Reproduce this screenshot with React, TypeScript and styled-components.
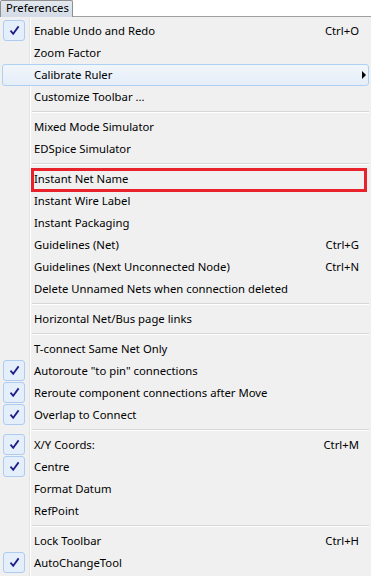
import * as React from 'react';
import styled, { createGlobalStyle, css } from 'styled-components';

const GlobalStyles = createGlobalStyle`
  html, body {
    margin: 0;
    padding: 0;
    background: #ffffff;
  }

  body {
    font-family: 'Segoe UI', 'Noto Sans', 'Liberation Sans', sans-serif;
    font-size: 11.3px;
    color: #000000;
  }

  *, *:before, *:after {
    box-sizing: border-box;
  }
`;

type Item =
  | { kind: 'sep' }
  | { kind: 'item'; label: string; shortcut?: string; checked?: boolean; submenu?: boolean; hover?: boolean; marked?: boolean };

const items: Item[] = [
  { kind: 'item', label: 'Enable Undo and Redo', shortcut: 'Ctrl+O', checked: true },
  { kind: 'item', label: 'Zoom Factor' },
  { kind: 'item', label: 'Calibrate Ruler', submenu: true, hover: true },
  { kind: 'item', label: 'Customize Toolbar ...' },
  { kind: 'sep' },
  { kind: 'item', label: 'Mixed Mode Simulator' },
  { kind: 'item', label: 'EDSpice Simulator' },
  { kind: 'sep' },
  { kind: 'item', label: 'Instant Net Name', marked: true },
  { kind: 'item', label: 'Instant Wire Label' },
  { kind: 'item', label: 'Instant Packaging' },
  { kind: 'item', label: 'Guidelines (Net)', shortcut: 'Ctrl+G' },
  { kind: 'item', label: 'Guidelines (Next Unconnected Node)', shortcut: 'Ctrl+N' },
  { kind: 'item', label: 'Delete Unnamed Nets when connection deleted' },
  { kind: 'sep' },
  { kind: 'item', label: 'Horizontal Net/Bus page links' },
  { kind: 'sep' },
  { kind: 'item', label: 'T-connect Same Net Only' },
  { kind: 'item', label: 'Autoroute "to pin" connections', checked: true },
  { kind: 'item', label: 'Reroute component connections after Move', checked: true },
  { kind: 'item', label: 'Overlap to Connect', checked: true },
  { kind: 'sep' },
  { kind: 'item', label: 'X/Y Coords:', shortcut: 'Ctrl+M', checked: true },
  { kind: 'item', label: 'Centre', checked: true },
  { kind: 'item', label: 'Format Datum' },
  { kind: 'item', label: 'RefPoint' },
  { kind: 'sep' },
  { kind: 'item', label: 'Lock Toolbar', shortcut: 'Ctrl+H' },
  { kind: 'item', label: 'AutoChangeTool', checked: true },
];

const MenuBar = styled.div`
  display: flex;
  height: 17px;
  background: #ffffff;
  border-bottom: 1px solid #a0a0a0;
`;

const BarButton = styled.div`
  height: 17px;
  width: 73px;
  padding-left: 5px;
  border: 1px solid #8e8f8f;
  border-bottom: none;
  border-radius: 2px 2px 0 0;
  background: linear-gradient(#e3e8ef, #d3dbe6);
  line-height: 14px;
  color: #000;
`;

const Menu = styled.div`
  position: relative;
  background: #f0f0f0;
  padding: 3px 2px 2px 2px;
  height: 559px;
`;

const Gutter = styled.div`
  position: absolute;
  top: 0;
  bottom: 0;
  left: 29px;
  width: 2px;
  border-left: 1px solid #e2e3e3;
  border-right: 1px solid #ffffff;
`;

const Row = styled.div<{ $hover?: boolean }>`
  position: relative;
  display: flex;
  align-items: center;
  height: 22px;
  padding-bottom: 1px;
  border: 1px solid transparent;
  border-radius: 3px;

  ${({ $hover }) =>
    $hover &&
    css`
      background: linear-gradient(#f2f6fb, #e5edf8);
      border-color: #aed0f2;
    `};
`;

const CheckCell = styled.div`
  width: 27px;
  height: 20px;
  display: flex;
  align-items: center;
  justify-content: flex-start;
`;

const CheckBox = styled.div`
  width: 22px;
  height: 21px;
  display: flex;
  align-items: center;
  justify-content: center;
  border: 1px solid #aeccf0;
  border-radius: 3px;
  background: #e5eefb;
`;

const Label = styled.div`
  flex: 1;
  padding-left: 4px;
  white-space: nowrap;
  color: #000;
`;

const Shortcut = styled.div`
  padding-right: 9px;
  white-space: nowrap;
`;

const Arrow = styled.div`
  width: 0;
  height: 0;
  margin-right: 2px;
  border-top: 4px solid transparent;
  border-bottom: 4px solid transparent;
  border-left: 4px solid #000;
`;

const Separator = styled.div`
  height: 8px;
  display: flex;
  align-items: center;
  padding-left: 30px;

  &::after {
    content: '';
    flex: 1;
    height: 2px;
    border-top: 1px solid #d7d7d7;
    border-bottom: 1px solid #ffffff;
  }
`;

const Marker = styled.div`
  position: absolute;
  left: 28px;
  top: -1px;
  width: 336px;
  height: 24px;
  border: 3px solid #e8212b;
  pointer-events: none;
`;

const Check = () => (
  <svg width="11" height="11" viewBox="0 0 11 11">
    <path d="M1.5 5.6 L4.2 8.8 L9.6 1.4" fill="none" stroke="#1f1f86" strokeWidth="1.8" />
  </svg>
);

export default function App() {
  return (
    <React.Fragment>
      <GlobalStyles />
      <MenuBar>
        <BarButton>Preferences</BarButton>
      </MenuBar>
      <Menu>
        <Gutter />
        {items.map((it, i) =>
          it.kind === 'sep' ? (
            <Separator key={i} />
          ) : (
            <Row key={i} $hover={it.hover}>
              <CheckCell>
                {it.checked && (
                  <CheckBox>
                    <Check />
                  </CheckBox>
                )}
              </CheckCell>
              <Label>{it.label}</Label>
              {it.shortcut && <Shortcut>{it.shortcut}</Shortcut>}
              {it.submenu && <Arrow />}
              {it.marked && <Marker />}
            </Row>
          ),
        )}
      </Menu>
    </React.Fragment>
  );
}
